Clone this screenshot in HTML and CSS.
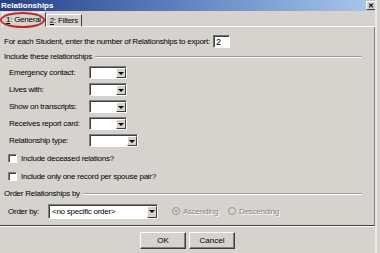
FILE: index.html
```html
<!DOCTYPE html>
<html>
<head>
    <link rel="stylesheet" href="styles.css">
</head>
<body>
    <div class="window">
        <div class="titlebar">
            <span class="title">Relationships</span>
            <span class="close">&#x2715;</span>
        </div>
        <div class="tabs">
            <div class="tab active"><u>1</u>: General<span class="mark"></span></div>
            <div class="tab"><u>2</u>: Filters</div>
            <div class="tab-rest"></div>
        </div>
        <div class="panel">
            <div class="count-row">
                <span>For each Student, enter the number of Relationships to export:</span>
                <span class="field">2</span>
            </div>

            <div class="group-head"><span>Include these relationships</span><i class="groove"></i></div>
            <div class="combo-grid">
                <label>Emergency contact:</label><span class="combo"><span class="arrow"></span></span>
                <label>Lives with:</label><span class="combo"><span class="arrow"></span></span>
                <label>Show on transcripts:</label><span class="combo"><span class="arrow"></span></span>
                <label>Receives report card:</label><span class="combo"><span class="arrow"></span></span>
                <label>Relationship type:</label><span class="combo wide"><span class="arrow"></span></span>
            </div>
            <div class="check-row"><span class="checkbox"></span>Include deceased relations?</div>
            <div class="check-row"><span class="checkbox"></span>Include only one record per spouse pair?</div>

            <div class="group-head"><span>Order Relationships by</span><i class="groove"></i></div>
            <div class="order-row">
                <label>Order by:</label>
                <span class="combo order"><span class="value">&lt;no specific order&gt;</span><span class="arrow"></span></span>
                <span class="radio on"></span><span class="disabled asc">Ascending</span>
                <span class="radio"></span><span class="disabled">Descending</span>
            </div>
        </div>
        <div class="footer">
            <button class="btn">OK</button>
            <button class="btn">Cancel</button>
        </div>
    </div>
</body>
</html>
```

FILE: styles.css
```css
body {
    margin: 0;
    padding: 0;
    background-color: #d6d3ce;
    font-family: 'Liberation Sans', Arial, sans-serif;
    font-size: 8px;
    letter-spacing: -0.25px;
    color: #000;
}

.window {
    width: 375px;
    height: 253px;
    border-right: 2px solid #ece9e4;
    display: flex;
    flex-direction: column;
    overflow: hidden;
}

/* title bar */
.titlebar {
    height: 11px;
    flex-shrink: 0;
    background: linear-gradient(to right, #23408a, #5b7dbe 45%, #a9c8ec);
    display: flex;
    align-items: center;
    justify-content: space-between;
    padding: 0 0 0 1px;
}

.title {
    color: #fff;
    font-weight: bold;
    font-size: 8px;
    letter-spacing: 0;
}

.close {
    width: 10px;
    height: 9px;
    margin-right: -1px;
    background-color: #d6d3ce;
    border: 1px solid;
    border-color: #fff #404040 #404040 #fff;
    box-sizing: border-box;
    font-size: 7px;
    line-height: 7px;
    text-align: center;
    font-weight: bold;
}

/* tabs */
.tabs {
    height: 16px;
    flex-shrink: 0;
    display: flex;
    align-items: flex-end;
}

.tab {
    position: relative;
    height: 13px;
    padding: 0 3px;
    line-height: 12px;
    white-space: nowrap;
    border: 1px solid;
    border-color: #fff #404040 #fff #fff;
    box-sizing: border-box;
}

.tab.active {
    height: 15px;
    margin-left: 2px;
    padding: 0 4px 0 3px;
    border-bottom-color: transparent;
    line-height: 14px;
}

.tab-rest {
    flex-grow: 1;
    border-bottom: 1px solid #fff;
}

.mark {
    position: absolute;
    left: -3px;
    top: -1px;
    width: 45px;
    height: 16px;
    border: 2px solid #c0262c;
    border-radius: 50%;
    box-sizing: border-box;
}

/* tab page */
.panel {
    height: 199px;
    flex-shrink: 0;
    padding: 7px 3px 0 4px;
    border-right: 1px solid #808080;
    border-bottom: 1px solid #404040;
    box-sizing: border-box;
}

.count-row {
    height: 14px;
    display: flex;
    align-items: center;
}

.field {
    width: 17px;
    height: 13px;
    margin-left: 3px;
    padding-left: 2px;
    background-color: #fff;
    border: 1px solid;
    border-color: #707070 #fff #fff #707070;
    box-shadow: inset 1px 1px 0 #404040;
    box-sizing: border-box;
    font-size: 9px;
    line-height: 12px;
}

.group-head {
    height: 15px;
    display: flex;
    align-items: center;
    margin-top: 1px;
}

.groove {
    flex-grow: 1;
    margin: 0 9px 0 3px;
    border-top: 1px solid #a09c96;
    border-bottom: 1px solid #fff;
}

.combo-grid {
    display: grid;
    grid-template-columns: 80px auto;
    grid-auto-rows: 17px;
    align-items: center;
    justify-items: start;
    padding-left: 5px;
}

.combo {
    width: 38px;
    height: 13px;
    display: flex;
    justify-content: flex-end;
    background-color: #fff;
    border: 1px solid;
    border-color: #808080 #fff #fff #808080;
    box-shadow: inset 1px 1px 0 #404040;
    box-sizing: border-box;
}

.combo.wide {
    width: 49px;
}

.arrow {
    width: 10px;
    height: 10px;
    margin-top: 1px;
    background-color: #d6d3ce;
    border: 1px solid;
    border-color: #fff #404040 #404040 #fff;
    box-sizing: border-box;
    display: flex;
    align-items: center;
    justify-content: center;
}

.arrow::after {
    content: "";
    border-left: 3px solid transparent;
    border-right: 3px solid transparent;
    border-top: 3px solid #000;
}

.check-row {
    height: 18px;
    display: flex;
    align-items: center;
    padding-left: 4px;
}

.checkbox {
    width: 9px;
    height: 9px;
    margin-right: 4px;
    background-color: #fff;
    border: 1px solid;
    border-color: #808080 #fff #fff #808080;
    box-shadow: inset 1px 1px 0 #404040;
    box-sizing: border-box;
}

.order-row {
    height: 18px;
    margin-top: 1px;
    display: flex;
    align-items: center;
    padding-left: 4px;
}

.order-row label {
    width: 40px;
}

.combo.order {
    width: 110px;
    height: 15px;
    justify-content: space-between;
    margin-right: 14px;
}

.combo.order .arrow {
    height: 12px;
}

.value {
    padding-left: 3px;
    line-height: 13px;
}

.radio {
    width: 8px;
    height: 8px;
    margin-right: 3px;
    border-radius: 50%;
    background-color: #d6d3ce;
    border: 1px solid #9a968f;
    box-sizing: border-box;
    display: flex;
    align-items: center;
    justify-content: center;
}

.radio.on::after {
    content: "";
    width: 2px;
    height: 2px;
    border-radius: 50%;
    background-color: #8a867f;
}

.disabled {
    color: #8a867f;
    text-shadow: 1px 1px 0 #fff;
    margin-right: 3px;
}

.disabled.asc {
    margin-right: 10px;
}

/* buttons */
.footer {
    display: flex;
    justify-content: center;
    gap: 3px;
    padding-top: 5px;
    border-top: 1px solid #fff;
}

.btn {
    width: 46px;
    height: 17px;
    padding: 0;
    font-family: inherit;
    font-size: 8px;
    color: #000;
    background-color: #d6d3ce;
    border: 1px solid;
    border-color: #fff #404040 #404040 #fff;
    box-shadow: inset -1px -1px 0 #808080;
}
```
